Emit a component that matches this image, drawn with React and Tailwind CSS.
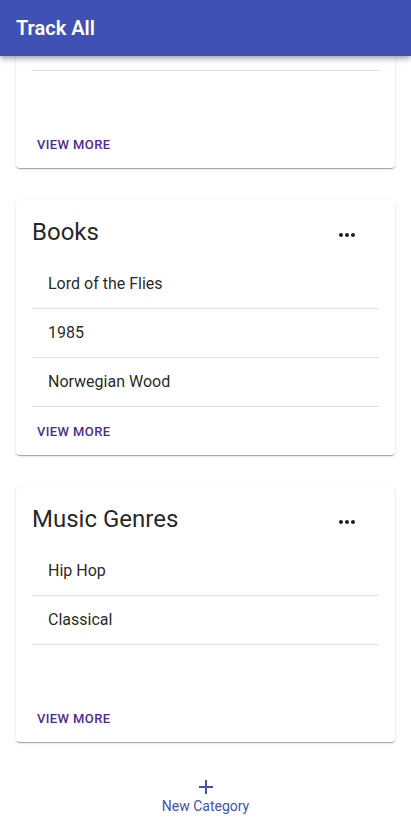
import React from 'react';

// first card is scrolled up under the app bar, only its bottom shows
const categories = [
  { name: '', items: ['', ''] },
  { name: 'Books', items: ['Lord of the Flies', '1985', 'Norwegian Wood'] },
  { name: 'Music Genres', items: ['Hip Hop', 'Classical'] },
];

const MoreHoriz = () => (
  <svg width="24" height="24" viewBox="0 0 24 24" className="fill-current">
    <path d="M6 10c-1.1 0-2 .9-2 2s.9 2 2 2 2-.9 2-2-.9-2-2-2zm12 0c-1.1 0-2 .9-2 2s.9 2 2 2 2-.9 2-2-.9-2-2-2zm-6 0c-1.1 0-2 .9-2 2s.9 2 2 2 2-.9 2-2-.9-2-2-2z" />
  </svg>
);

const CategoryCard = ({ cat }) => (
  <div className="bg-white rounded-[4px] shadow-[0_2px_1px_-1px_rgba(0,0,0,0.2),0_1px_1px_0_rgba(0,0,0,0.14),0_1px_3px_0_rgba(0,0,0,0.12)]">
    <div className="px-4 pt-4">
      <div className="flex items-center justify-between h-8">
        <h2 className="text-[24px] leading-8 text-black/[0.87]">{cat.name}</h2>
        <button className="mr-5 mt-[6px] text-black/[0.87]"><MoreHoriz /></button>
      </div>
      <ul className="mt-[12px] h-[147px]">
        {cat.items.map((item, i) => (
          <li key={i} className="h-[49px] flex items-center pl-4 border-b border-[#e0e0e0] text-[16px] text-black/[0.87]">
            {item}
          </li>
        ))}
      </ul>
    </div>
    <div className="h-12 flex items-center pl-[21px] pt-[2px]">
      <button className="text-[13px] font-medium uppercase tracking-[0.03em] text-[#4f2a95]">View more</button>
    </div>
  </div>
);

export default function App() {
  return (
    <div className="relative w-[411px] h-[823px] overflow-hidden bg-white" style={{ fontFamily: 'Roboto, "Noto Sans", sans-serif' }}>
      <header className="absolute top-0 left-0 right-0 z-10 h-14 bg-[#3f51b5] flex items-center px-4 shadow-[0_2px_4px_-1px_rgba(0,0,0,0.2),0_4px_5px_0_rgba(0,0,0,0.14),0_1px_10px_0_rgba(0,0,0,0.12)]">
        <h1 className="text-white text-[20px] font-semibold">Track All</h1>
      </header>
      <main className="-mt-[87px] px-4 flex flex-col gap-8">
        {categories.map((cat, i) => <CategoryCard key={i} cat={cat} />)}
        <button className="mt-[1px] flex flex-col items-center text-[#3f51b5]">
          <svg width="24" height="24" viewBox="0 0 24 24" className="fill-current">
            <path d="M19 13h-6v6h-2v-6H5v-2h6V5h2v6h6v2z" />
          </svg>
          <span className="text-[14px] leading-5 -mt-[3px]">New Category</span>
        </button>
      </main>
    </div>
  );
}
